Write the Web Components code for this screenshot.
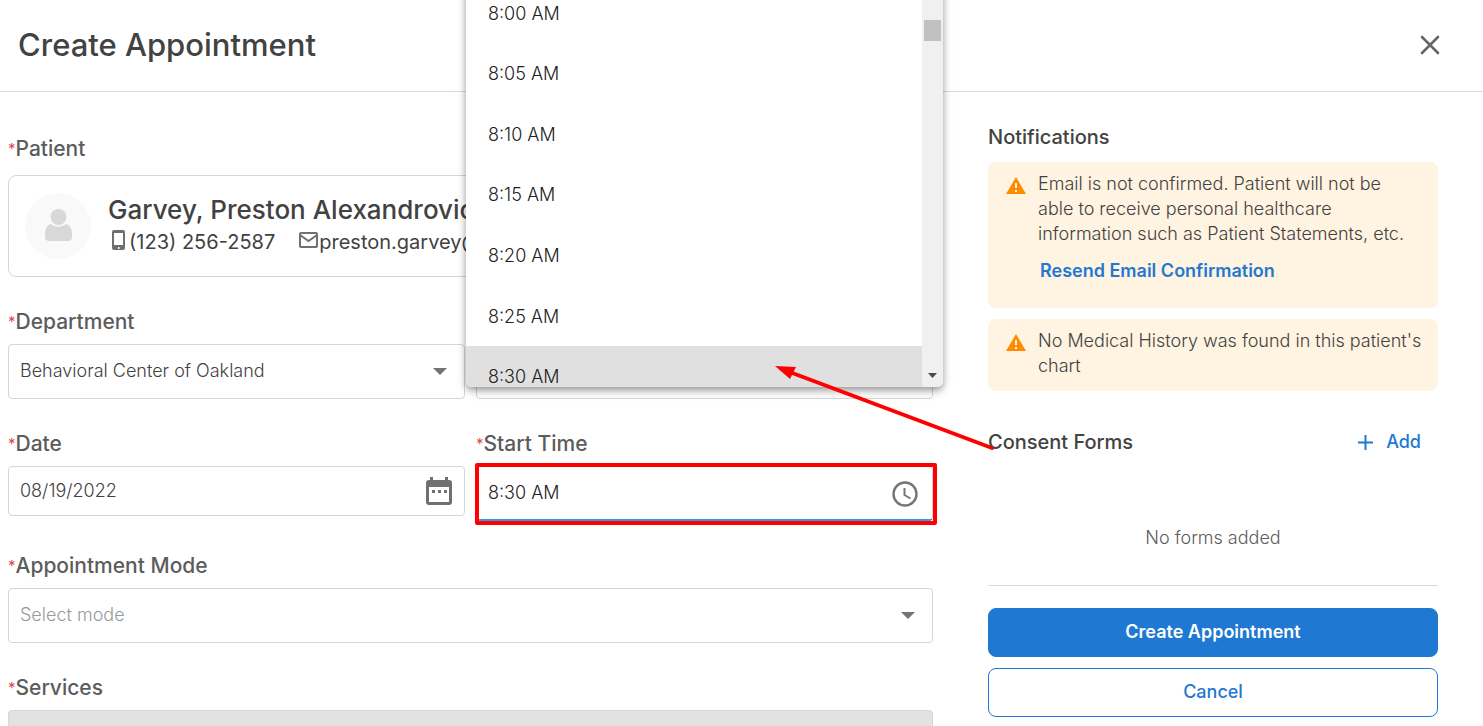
<!DOCTYPE html>
<html lang="en">
<head>
<meta charset="utf-8">
<title>Create Appointment</title>
<style>
  body {
    margin: 0;
    background: #fff;
    color: #424242;
    font-family: Inter, "Liberation Sans", sans-serif;
    font-size: 18px;
  }
</style>
</head>
<body>
<appointment-page></appointment-page>

<script>
class PageHeader extends HTMLElement {
  constructor() {
    super();
    this.attachShadow({ mode: 'open' });
  }

  connectedCallback() {
    this.shadowRoot.innerHTML = `
      <style>
        :host {
          display: flex;
          align-items: center;
          justify-content: space-between;
          box-sizing: border-box;
          height: 92px;
          padding: 0 40px 2px 18px;
          border-bottom: 1px solid #dadada;
        }
        h1 {
          margin: 0;
          font-size: 31px;
          font-weight: 500;
          line-height: 40px;
        }
        button {
          display: flex;
          padding: 0;
          border: none;
          background: none;
          cursor: pointer;
        }
      </style>
      <h1><slot></slot></h1>
      <button type="button" aria-label="Close">
        <svg width="26" height="26" viewBox="0 0 26 26" fill="none" stroke="#666" stroke-width="2.600" stroke-linecap="round">
          <path d="M5 5 21 21M21 5 5 21"/>
        </svg>
      </button>
    `;
  }
}

const fieldIcons = {
  select: `<svg width="14" height="7" viewBox="0 0 14 7"><path fill="#757575" d="M0 0h14L7 7z"/></svg>`,
  date: `
    <svg width="26" height="28" viewBox="0 0 26 28">
      <path fill="#707070" fill-rule="evenodd" d="M4 0h3v3h12V0h3v3h1a3 3 0 0 1 3 3v19a3 3 0 0 1-3 3H3a3 3 0 0 1-3-3V6a3 3 0 0 1 3-3h1zM3 10v15h20V10z"/>
      <path fill="#707070" d="M6 13h3v3H6zM12 13h3v3h-3zM18 13h3v3h-3z"/>
    </svg>`,
  time: `
    <svg width="26" height="26" viewBox="0 0 26 26" fill="none" stroke="#757575">
      <circle cx="13" cy="13" r="11.500" stroke-width="2.400"/>
      <path stroke-width="2" d="M12.500 7v7l6 3.500"/>
    </svg>`
};

class FormField extends HTMLElement {
  constructor() {
    super();
    this.attachShadow({ mode: 'open' });
  }

  connectedCallback() {
    const label = this.getAttribute('label');
    const type = this.getAttribute('type') || 'text';
    const value = this.getAttribute('value') || '';
    const disabled = this.hasAttribute('disabled') ? 'disabled' : '';

    const control = type === 'select'
      ? `<select id="control"><option>${value}</option></select>`
      : `<input id="control" type="text" value="${value}" ${disabled}>`;

    this.shadowRoot.innerHTML = `
      <style>
        :host {
          display: flex;
          flex-direction: column;
          gap: 10px;
          position: relative;
        }
        label {
          height: 24px;
          color: #5c5c5c;
          font-size: 21px;
          font-weight: 500;
          line-height: 24px;
          white-space: nowrap;
        }
        label span {
          color: #e0474c;
          font-size: 15px;
          font-weight: 400;
          vertical-align: 2px;
        }
        .box {
          display: grid;
          align-items: center;
        }
        input, select {
          grid-area: 1 / 1;
          box-sizing: border-box;
          width: 100%;
          height: 55px;
          margin: 0;
          padding: 0 64px 2px 11px;
          border: 1px solid #d6d6d6;
          border-radius: 4px;
          background: #fff;
          color: #424242;
          font: inherit;
          font-weight: 300;
          appearance: none;
          outline: none;
        }
        input:disabled {
          background: #e2e2e2;
        }
        svg {
          grid-area: 1 / 1;
          justify-self: end;
          margin-right: 18px;
          pointer-events: none;
        }
        :host([type="date"]) input {
          height: 50px;
        }
        :host([type="date"]) svg {
          margin-right: 13px;
        }
        :host([type="time"]) input {
          border-bottom: 2px solid #2e9be0;
          color: #222;
        }
        :host([type="time"]) svg {
          margin-right: 15px;
        }
        :host([placeholder]) select {
          color: #999;
        }
      </style>
      <label for="control">${label ? `<span>*</span>${label}` : ''}</label>
      <div class="box">${control}${fieldIcons[type] || ''}</div>
      <slot></slot>
    `;
  }
}

class PatientCard extends HTMLElement {
  constructor() {
    super();
    this.attachShadow({ mode: 'open' });
  }

  connectedCallback() {
    this.shadowRoot.innerHTML = `
      <style>
        :host {
          display: flex;
          flex-direction: column;
          gap: 14px;
        }
        h2 {
          margin: 0;
          color: #5c5c5c;
          font-size: 21px;
          font-weight: 500;
          line-height: 24px;
        }
        h2 span {
          color: #e0474c;
          font-size: 15px;
          font-weight: 400;
          vertical-align: 2px;
        }
        .card {
          display: flex;
          align-items: center;
          gap: 17px;
          box-sizing: border-box;
          height: 102px;
          padding: 0 16px;
          border: 1px solid #d6d6d6;
          border-radius: 8px;
          overflow: hidden;
          white-space: nowrap;
        }
        .name {
          font-size: 26px;
          font-weight: 500;
          line-height: 32px;
        }
        .contacts {
          display: flex;
          gap: 23px;
          font-size: 20px;
          line-height: 32px;
        }
        .contacts span {
          display: flex;
          align-items: center;
        }
        .contacts svg {
          margin: 0 1px 4px 0;
        }
      </style>
      <h2><span>*</span>Patient</h2>
      <div class="card">
        <svg width="66" height="66" viewBox="0 0 66 66">
          <circle cx="33" cy="33" r="33" fill="#f9f9f9"/>
          <circle cx="33.500" cy="24" r="8" fill="#d8d8d8"/>
          <path fill="#d8d8d8" d="M26 31c4.500 3.600 10.500 3.600 15 0 4 1 6 5 6 10v3c0 3-2 4-4 4H24c-2 0-4-1-4-4v-3c0-5 2-9 6-10z"/>
        </svg>
        <div>
          <div class="name"><slot name="name"></slot></div>
          <div class="contacts">
            <span>
              <svg width="20" height="22" viewBox="0 0 20 22">
                <path fill="#707070" fill-rule="evenodd" d="M6 1h9a2 2 0 0 1 2 2v16a2 2 0 0 1-2 2H6a2 2 0 0 1-2-2V3a2 2 0 0 1 2-2zm0 3v12h9V4zm4 14v2h1.500v-2z"/>
              </svg>
              <slot name="phone"></slot>
            </span>
            <span>
              <svg width="20" height="16" viewBox="0 0 20 16" fill="none" stroke="#707070" stroke-width="2">
                <rect x="2" y="1" width="17" height="14" rx="1"/>
                <path d="m2 3 8.500 6L19 3"/>
              </svg>
              <slot name="email"></slot>
            </span>
          </div>
        </div>
      </div>
    `;
  }
}

class TimeMenu extends HTMLElement {
  constructor() {
    super();
    this.attachShadow({ mode: 'open' });
  }

  connectedCallback() {
    const times = ['8:00 AM', '8:05 AM', '8:10 AM', '8:15 AM', '8:20 AM', '8:25 AM', '8:30 AM'];
    const selected = this.getAttribute('selected');

    // The menu opens upwards over the form and is cut by the window's top
    this.shadowRoot.innerHTML = `
      <style>
        :host {
          position: absolute;
          z-index: 2;
          bottom: calc(100% + 45px);
          left: -10px;
          right: -10px;
          display: grid;
          grid-template-columns: 1fr 21px;
          height: 404px;
          overflow: hidden;
          border-radius: 6px;
          background: #fff;
          box-shadow: 0 3px 6px rgba(0,0,0,0.3), 0 4px 12px rgba(0,0,0,0.15);
        }
        ul {
          display: grid;
          grid-auto-rows: 1fr;
          height: 424px;
          margin: 0;
          padding: 0;
          list-style: none;
        }
        li {
          display: flex;
          align-items: center;
          padding: 0 22px;
          color: #222;
          font-weight: 300;
        }
        li[aria-selected="true"] {
          background: #e0e0e0;
        }
        .scrollbar {
          display: flex;
          flex-direction: column;
          justify-content: space-between;
          align-items: center;
          height: 404px;
          box-sizing: border-box;
          padding: 37px 0 9px;
          background: #f0f0f0;
        }
        .thumb {
          width: 17px;
          height: 21px;
          background: #c1c1c1;
        }
      </style>
      <ul role="listbox">
        ${times.map((time) => `<li role="option" aria-selected="${time === selected}">${time}</li>`).join('')}
      </ul>
      <div class="scrollbar">
        <div class="thumb"></div>
        <svg width="9" height="5" viewBox="0 0 9 5"><path fill="#4a4a4a" d="M0 0h9L4.500 5z"/></svg>
      </div>
    `;
  }
}

class FieldCallout extends HTMLElement {
  constructor() {
    super();
    this.attachShadow({ mode: 'open' });
  }

  connectedCallback() {
    this.shadowRoot.innerHTML = `
      <style>
        :host {
          position: absolute;
          z-index: 3;
          inset: 31px -4px -4px -1px;
          box-sizing: border-box;
          border: 4px solid #f00;
          border-radius: 2px;
          pointer-events: none;
        }
        svg {
          position: absolute;
          right: -62px;
          bottom: 69px;
        }
      </style>
      <svg width="220" height="86" viewBox="0 0 220 86">
        <path fill="none" stroke="#f00" stroke-width="4" stroke-linecap="round" d="M12 5 217 82"/>
        <path fill="#f00" d="M0 0 21 1 15 13z"/>
      </svg>
    `;
  }
}

class NoticeCard extends HTMLElement {
  constructor() {
    super();
    this.attachShadow({ mode: 'open' });
  }

  connectedCallback() {
    this.shadowRoot.innerHTML = `
      <style>
        :host {
          display: flex;
          align-items: flex-start;
          gap: 12px;
          padding: 9px 14px 13px 18px;
          border-radius: 8px;
          background: #fff3e1;
          font-weight: 300;
          line-height: 25px;
        }
        svg {
          flex: none;
          margin-top: 6px;
        }
        ::slotted(a) {
          display: block;
          margin: 12px 2px;
          color: #1f78d1;
          font-weight: 600;
          text-decoration: none;
        }
      </style>
      <svg width="20" height="18" viewBox="0 0 20 18">
        <path fill="#ff8c00" d="M10 0 20 17H0z"/>
        <path fill="#fff3e1" d="M9 6h2v5H9zM9 13h2v2H9z"/>
      </svg>
      <div><slot></slot></div>
    `;
  }
}

class ConsentForms extends HTMLElement {
  constructor() {
    super();
    this.attachShadow({ mode: 'open' });
  }

  connectedCallback() {
    this.shadowRoot.innerHTML = `
      <style>
        :host {
          display: block;
          border-bottom: 1px solid #dadada;
        }
        header {
          display: flex;
          align-items: center;
          justify-content: space-between;
          padding-right: 17px;
        }
        h2 {
          margin: 0;
          font-size: 20px;
          font-weight: 500;
          line-height: 24px;
        }
        button {
          display: flex;
          align-items: center;
          gap: 13px;
          padding: 0;
          border: none;
          background: none;
          color: #1f78d1;
          font: inherit;
          font-weight: 500;
          line-height: 24px;
          cursor: pointer;
        }
        p {
          margin: 0;
          padding: 72px 0 35px;
          color: #5c5c5c;
          font-weight: 300;
          line-height: 24px;
          text-align: center;
        }
      </style>
      <header>
        <h2>Consent Forms</h2>
        <button type="button">
          <svg width="15" height="15" viewBox="0 0 15 15" stroke="#1f78d1" stroke-width="2"><path d="M7.500 0v15M0 7.500h15"/></svg>
          Add
        </button>
      </header>
      <p><slot></slot></p>
    `;
  }
}

class ActionButton extends HTMLElement {
  constructor() {
    super();
    this.attachShadow({ mode: 'open' });
  }

  connectedCallback() {
    this.shadowRoot.innerHTML = `
      <style>
        :host {
          display: block;
        }
        button {
          display: block;
          box-sizing: border-box;
          width: 100%;
          height: 49px;
          padding: 0 0 2px;
          border: 1px solid #1f78d1;
          border-radius: 8px;
          background: #fff;
          color: #1f78d1;
          font: inherit;
          font-weight: 500;
          cursor: pointer;
        }
        :host([primary]) button {
          background: #1f78d1;
          color: #fff;
          font-weight: 600;
        }
      </style>
      <button type="button"><slot></slot></button>
    `;
  }
}

class AppointmentPage extends HTMLElement {
  constructor() {
    super();
    this.attachShadow({ mode: 'open' });
  }

  connectedCallback() {
    this.shadowRoot.innerHTML = `
      <style>
        :host {
          display: block;
          height: 100vh;
          overflow: hidden;
        }
        main {
          display: grid;
          grid-template-columns: minmax(0, 1fr) 450px;
          gap: 55px;
          padding: 0 45px 0 8px;
        }
        form {
          display: grid;
          grid-template-columns: 1fr 1fr;
          gap: 33px 11px;
          align-content: start;
          padding-top: 45px;
        }
        .wide {
          grid-column: 1 / -1;
        }
        aside {
          padding-top: 33px;
        }
        h2 {
          margin: 0 0 13px;
          font-size: 20px;
          font-weight: 500;
          line-height: 24px;
        }
        notice-card {
          margin-bottom: 11px;
        }
        consent-forms {
          margin: 39px 0 22px;
        }
        action-button {
          margin-bottom: 11px;
        }
      </style>
      <page-header>Create Appointment</page-header>
      <main>
        <form>
          <patient-card class="wide">
            <span slot="name">Garvey, Preston Alexandrovich</span>
            <span slot="phone">(123) 256-2587</span>
            <span slot="email">preston.garvey@</span>
          </patient-card>
          <form-field label="Department" type="select" value="Behavioral Center of Oakland"></form-field>
          <form-field></form-field>
          <form-field label="Date" type="date" value="08/19/2022"></form-field>
          <form-field label="Start Time" type="time" value="8:30 AM">
            <time-menu selected="8:30 AM"></time-menu>
            <field-callout></field-callout>
          </form-field>
          <form-field class="wide" label="Appointment Mode" type="select" value="Select mode" placeholder></form-field>
          <form-field class="wide" label="Services" disabled></form-field>
        </form>
        <aside>
          <h2>Notifications</h2>
          <notice-card>
            Email is not confirmed. Patient will not be<br>
            able to receive personal healthcare information such as Patient Statements, etc.
            <a href="#resend">Resend Email Confirmation</a>
          </notice-card>
          <notice-card>No Medical History was found in this patient's chart</notice-card>
          <consent-forms>No forms added</consent-forms>
          <action-button primary>Create Appointment</action-button>
          <action-button>Cancel</action-button>
        </aside>
      </main>
    `;
  }
}

customElements.define('page-header', PageHeader);
customElements.define('form-field', FormField);
customElements.define('patient-card', PatientCard);
customElements.define('time-menu', TimeMenu);
customElements.define('field-callout', FieldCallout);
customElements.define('notice-card', NoticeCard);
customElements.define('consent-forms', ConsentForms);
customElements.define('action-button', ActionButton);
customElements.define('appointment-page', AppointmentPage);
</script>
</body>
</html>
